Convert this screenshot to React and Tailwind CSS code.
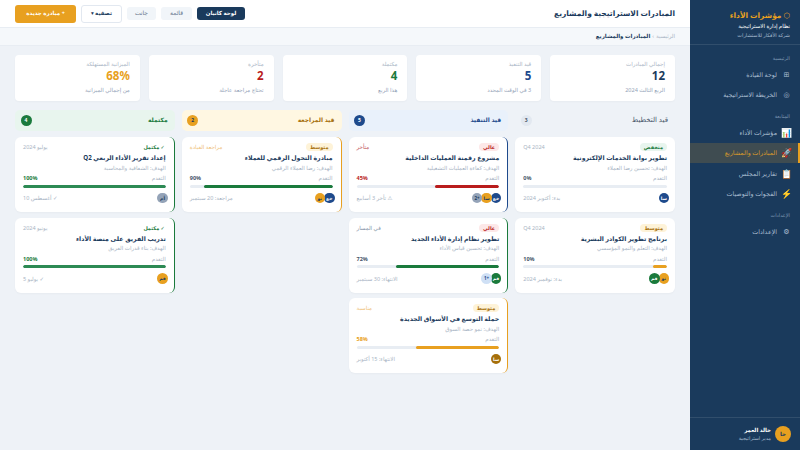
const NAVY = "#1a3a5c";

const stats = [
  { label: "إجمالي المبادرات", value: "12", sub: "الربع الثالث 2024", color: "text-[#1a3a5c]" },
  { label: "قيد التنفيذ", value: "5", sub: "3 في الوقت المحدد", color: "text-[#1e4a8c]" },
  { label: "مكتملة", value: "4", sub: "هذا الربع", color: "text-[#1a7a3c]" },
  { label: "متأخرة", value: "2", sub: "تحتاج مراجعة عاجلة", color: "text-[#b91c1c]" },
  { label: "الميزانية المستهلكة", value: "68%", sub: "من إجمالي الميزانية", color: "text-[#e8a020]" },
];

const badges = {
  low: "bg-[#e8f5ee] text-[#1a7a3c]",
  mid: "bg-[#fef3d8] text-[#a66f0a]",
  high: "bg-[#fde8e8] text-[#b91c1c]",
};

const borders = {
  none: "",
  green: "border-r-[1.5px] border-[#1a7a3c]",
  gold: "border-r-[1.5px] border-[#e8a020]",
  blue: "border-r-[1.5px] border-[#1e4a8c]",
};

const columns = [
  {
    title: "قيد التخطيط",
    count: 3,
    head: "bg-[#eef2f7] text-[#475569]",
    titleCls: "text-[7px]",
    dot: "bg-[#e2e8f0] text-[#475569]",
    cards: [
      {
        badge: "منخفض", badgeType: "low", meta: "Q4 2024", metaCls: "text-[#a8b4c4]",
        title: "تطوير بوابة الخدمات الإلكترونية", goal: "الهدف: تحسين رضا العملاء",
        pct: 0, pctCls: "text-[#475569]", bar: "bg-[#94a3b8]", foot: "بدء: أكتوبر 2024",
        avatars: [["سا", "bg-[#1e4a8c] text-white"]], border: "none",
      },
      {
        badge: "متوسط", badgeType: "mid", meta: "Q4 2024", metaCls: "text-[#a8b4c4]",
        title: "برنامج تطوير الكوادر البشرية", goal: "الهدف: التعلم والنمو المؤسسي",
        pct: 10, pctCls: "text-[#475569]", bar: "bg-[#e8a020]", foot: "بدء: نوفمبر 2024",
        avatars: [["نو", "bg-[#e8a020] text-[#1a3a5c]"], ["فم", "bg-[#1a7a3c] text-white"]], border: "none",
      },
    ],
  },
  {
    title: "قيد التنفيذ",
    count: 5,
    head: "bg-[#e9f1fb] text-[#1e4a8c]",
    titleCls: "text-[6px] font-bold",
    dot: "bg-[#1e4a8c] text-white",
    cards: [
      {
        badge: "عالي", badgeType: "high", meta: "متأخر", metaCls: "text-[#c2545a]",
        title: "مشروع رقمنة العمليات الداخلية", goal: "الهدف: كفاءة العمليات التشغيلية",
        pct: 45, pctCls: "text-[#b91c1c]", bar: "bg-[#b91c1c]", foot: "⚠ تأخر 3 أسابيع",
        avatars: [["خع", "bg-[#1e4a8c] text-white"], ["سا", "bg-[#e8a020] text-[#1a3a5c]"], ["+2", "bg-[#94a3b8] text-[#1a3a5c]"]], border: "blue",
      },
      {
        badge: "عالي", badgeType: "high", meta: "في المسار", metaCls: "text-[#8492a6]",
        title: "تطوير نظام إدارة الأداء الجديد", goal: "الهدف: تحسين قياس الأداء",
        pct: 72, pctCls: "text-[#475569]", bar: "bg-[#1a7a3c]", foot: "الانتهاء: 30 سبتمبر",
        avatars: [["فم", "bg-[#1a7a3c] text-white"], ["+1", "bg-[#cfe0f5] text-[#1e4a8c]"]], border: "green",
      },
      {
        badge: "متوسط", badgeType: "mid", meta: "مناسبة", metaCls: "text-[#efc27a]",
        title: "حملة التوسع في الأسواق الجديدة", goal: "الهدف: نمو حصة السوق",
        pct: 58, pctCls: "text-[#e8a020]", bar: "bg-[#e8a020]", foot: "الانتهاء: 15 أكتوبر",
        avatars: [["سا", "bg-[#a66f0a] text-white"]], border: "gold",
      },
    ],
  },
  {
    title: "قيد المراجعة",
    count: 2,
    head: "bg-[#fff7e2] text-[#a66f0a]",
    titleCls: "text-[6px] font-bold",
    dot: "bg-[#e8a020] text-[#1a3a5c]",
    cards: [
      {
        badge: "متوسط", badgeType: "mid", meta: "مراجعة القيادة", metaCls: "text-[#efc27a]",
        title: "مبادرة التحول الرقمي للعملاء", goal: "الهدف: رضا العملاء الرقمي",
        pct: 90, pctCls: "text-[#475569]", bar: "bg-[#1a7a3c]", foot: "مراجعة: 20 سبتمبر",
        avatars: [["خع", "bg-[#1e4a8c] text-white"], ["نو", "bg-[#e8a020] text-[#1a3a5c]"]], border: "gold",
      },
    ],
  },
  {
    title: "مكتملة",
    count: 4,
    head: "bg-[#e8f5ee] text-[#1a7a3c]",
    titleCls: "text-[6px] font-bold",
    dot: "bg-[#1a7a3c] text-white",
    cards: [
      {
        badge: "✓ مكتمل", badgeType: null, meta: "يوليو 2024", metaCls: "text-[#a8b4c4]",
        title: "إعداد تقرير الأداء الربعي Q2", goal: "الهدف: الشفافية والمحاسبة",
        pct: 100, pctCls: "text-[#1a7a3c]", bar: "bg-[#2d8a54]", foot: "✓ أغسطس 10",
        avatars: [["أم", "bg-[#94a3b8] text-[#1a3a5c]"]], border: "green",
      },
      {
        badge: "✓ مكتمل", badgeType: null, meta: "يونيو 2024", metaCls: "text-[#a8b4c4]",
        title: "تدريب الفريق على منصة الأداء", goal: "الهدف: بناء قدرات الفريق",
        pct: 100, pctCls: "text-[#1a7a3c]", bar: "bg-[#2d8a54]", foot: "✓ يوليو 5",
        avatars: [["فم", "bg-[#e8a020] text-[#1a3a5c]"]], border: "green",
      },
    ],
  },
];

function Card({ card }) {
  return (
    <div className={`bg-white rounded-[6px] h-[75px] px-[8px] pt-[6px] shadow-[0_1px_2px_rgba(0,0,0,0.03)] ${borders[card.border]}`}>
      <div className="flex justify-between items-start h-[9px]">
        {card.badgeType ? (
          <span className={`text-[5px] leading-[8px] font-bold px-[4px] rounded-full ${badges[card.badgeType]}`}>{card.badge}</span>
        ) : (
          <span className="text-[5px] leading-[8px] font-bold text-[#1a7a3c] px-px">{card.badge}</span>
        )}
        <span className={`text-[5.5px] leading-[8px] ${card.metaCls}`}>{card.meta}</span>
      </div>
      <div className="text-[6.2px] leading-[11px] font-bold text-[#1a3a5c] whitespace-nowrap">{card.title}</div>
      <div className="mt-[0.5px] text-[5.5px] leading-[9px] text-[#a8b4c4]">{card.goal}</div>
      <div className="mt-[1.5px] flex justify-between text-[5.5px] leading-[8px]">
        <span className="text-[#a8b4c4]">التقدم</span>
        <span className={`font-bold ${card.pctCls}`}>{card.pct}%</span>
      </div>
      <div className="mt-[2.5px] h-[3px] rounded-full bg-[#e8edf3] overflow-hidden">
        <div className={`h-full rounded-full ${card.bar}`} style={{ width: `${card.pct}%` }} />
      </div>
      <div className="mt-[5px] flex justify-between items-center h-[11px]">
        <div className="flex -mr-[2px]">
          {card.avatars.map(([t, cls], i) => (
            <span
              key={i}
              className={`w-[10.5px] h-[10.5px] rounded-full flex items-center justify-center text-[4.5px] font-bold ${i > 0 ? "-mr-[1px]" : ""} ${cls}`}
            >
              {t}
            </span>
          ))}
        </div>
        <span className="text-[5.5px] leading-[8px] text-[#a8b4c4]">{card.foot}</span>
      </div>
    </div>
  );
}

function NavItem({ icon, label, active, small }) {
  return (
    <div
      className={`h-[20.5px] flex items-center gap-[5px] text-[6.3px] ${
        active
          ? "bg-[rgba(232,160,32,0.18)] border-r-2 border-[#e8a020] text-[#d99a2b] pr-[7px]"
          : "text-[#a9bdd1] pr-[9px]"
      }`}
    >
      <span className={`w-[9px] flex items-center justify-center leading-none ${small ? "text-[7px]" : "text-[9px]"}`}>{icon}</span>
      <span>{label}</span>
    </div>
  );
}

function SectionLabel({ children, className }) {
  return <div className={`pr-[10px] text-[5px] leading-[8px] text-[#7f99b3] ${className}`}>{children}</div>;
}

export default function App() {
  return (
    <div dir="rtl" className="w-[800px] h-[450px] overflow-hidden flex bg-[#eef2f7] font-['Noto_Sans','DejaVu_Sans',sans-serif]">
      {/* sidebar */}
      <aside className="w-[110px] shrink-0 flex flex-col" style={{ background: NAVY }}>
        <div className="h-[45px] px-[10px] pt-[10px] border-b border-white/10">
          <div className="text-[7.5px] leading-[10px] font-bold text-[#e8a020]">⬡ مؤشرات الأداء</div>
          <div className="mt-[2px] text-[5.5px] leading-[8px] text-white">نظام إدارة الاستراتيجية</div>
          <div className="mt-[1px] text-[5px] leading-[8px] text-[#a9bdd1]">شركة الأفكار للاستشارات</div>
        </div>
        <SectionLabel className="mt-[9px]">الرئيسية</SectionLabel>
        <div className="mt-[2px]">
          <NavItem icon="⊞" label="لوحة القيادة" small />
          <NavItem icon="◎" label="الخريطة الاستراتيجية" small />
        </div>
        <SectionLabel className="mt-[7px]">المتابعة</SectionLabel>
        <div className="mt-[2px]">
          <NavItem icon="📊" label="مؤشرات الأداء" />
          <NavItem icon="🚀" label="المبادرات والمشاريع" active />
          <NavItem icon="📋" label="تقارير المجلس" />
          <NavItem icon="⚡️" label="الفجوات والتوصيات" />
        </div>
        <SectionLabel className="mt-[7px]">الإعدادات</SectionLabel>
        <div className="mt-[2px]">
          <NavItem icon="⚙" label="الإعدادات" small />
        </div>
        <div className="mt-auto h-[33px] border-t border-white/10 flex items-center gap-[4px] px-[9px]">
          <span className="w-[16px] h-[16px] rounded-full bg-[#e8a020] flex items-center justify-center text-[5.5px] font-bold text-[#1a3a5c]">خا</span>
          <div>
            <div className="text-[5.5px] leading-[9px] font-bold text-white">خالد العمر</div>
            <div className="text-[5px] leading-[7px] text-[#a9bdd1]">مدير استراتيجية</div>
          </div>
        </div>
      </aside>

      <div className="flex-1 min-w-0 flex flex-col">
        {/* top bar */}
        <header className="h-[28px] shrink-0 bg-white border-b border-[#e8edf3] flex items-center justify-between px-[15px]">
          <h1 className="text-[7.5px] font-bold text-[#1a3a5c]">المبادرات الاستراتيجية والمشاريع</h1>
          <div className="flex items-center gap-[5px]">
            <button className="h-[13.5px] w-[48px] rounded-[3px] bg-[#1a3a5c] text-white text-[5.5px] font-bold whitespace-nowrap">لوحة كانبان</button>
            <button className="h-[13.5px] w-[31px] rounded-[3px] bg-[#f1f5f9] text-[#64748b] text-[6px]">قائمة</button>
            <button className="h-[13.5px] w-[29px] rounded-[3px] bg-[#f1f5f9] text-[#64748b] text-[6px]">جانت</button>
            <button className="h-[18px] w-[41px] rounded-[3px] bg-white border border-[#e2e8f0] text-[#1a3a5c] text-[5.5px] font-bold whitespace-nowrap">تصفية ▾</button>
            <button className="h-[18px] w-[61px] rounded-[3px] bg-[#e8a020] text-white text-[5.5px] font-bold whitespace-nowrap">+ مبادرة جديدة</button>
          </div>
        </header>

        {/* breadcrumb */}
        <div className="h-[18px] shrink-0 bg-[#f5f8fb] border-b border-[#e8edf3] flex items-center gap-[2px] px-[15px] text-[5.5px]">
          <span className="text-[#a8b4c4]">الرئيسية</span>
          <span className="text-[#a8b4c4]">›</span>
          <span className="font-bold text-[#1a3a5c]">المبادرات والمشاريع</span>
        </div>

        <main className="flex-1 px-[15px] pt-[9px]">
          {/* stats */}
          <div className="grid grid-cols-5 gap-[9px]">
            {stats.map((s) => (
              <div key={s.label} className="bg-white rounded-[4px] h-[46px] px-[10px] pt-[5px] shadow-[0_1px_2px_rgba(0,0,0,0.03)]">
                <div className="text-[5.5px] leading-[8px] text-[#a8b4c4]">{s.label}</div>
                <div className={`text-[11.5px] leading-[16px] font-bold ${s.color}`}>{s.value}</div>
                <div className="mt-[2px] text-[5.5px] leading-[8px] text-[#94a3b8]">{s.sub}</div>
              </div>
            ))}
          </div>

          {/* kanban */}
          <div className="mt-[9px] grid grid-cols-4 gap-[7px] items-start">
            {columns.map((col) => (
              <div key={col.title}>
                <div className={`h-[21px] rounded-[5px] flex items-center justify-between pr-[7px] pl-[5.5px] ${col.head}`}>
                  <span className={col.titleCls}>{col.title}</span>
                  <span className={`w-[11px] h-[11px] rounded-full flex items-center justify-center text-[5px] font-bold ${col.dot}`}>{col.count}</span>
                </div>
                <div className="mt-[6px] flex flex-col gap-[5.5px]">
                  {col.cards.map((c) => (
                    <Card key={c.title} card={c} />
                  ))}
                </div>
              </div>
            ))}
          </div>
        </main>
      </div>
    </div>
  );
}
